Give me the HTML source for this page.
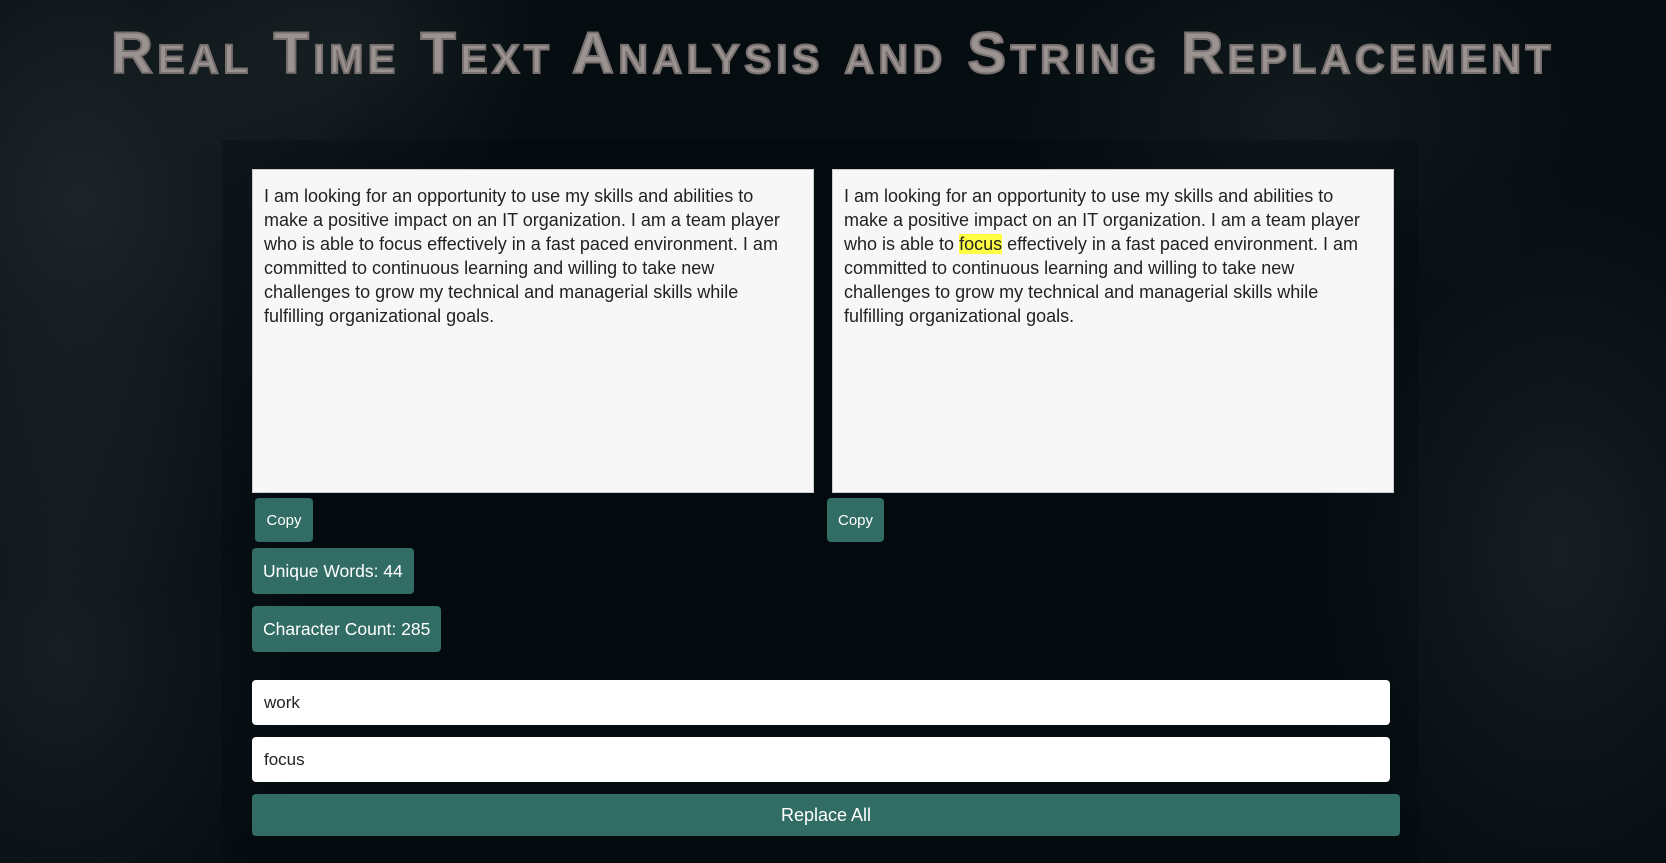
<!DOCTYPE html>
<html><head><meta charset="utf-8">
<style>
*{box-sizing:border-box;margin:0;padding:0}
html,body{width:1666px;height:863px;overflow:hidden}
body{background:#050d11;font-family:"Liberation Sans",sans-serif;position:relative;
background-image:radial-gradient(ellipse 300px 400px at 80px 200px,rgba(70,80,82,.35),transparent),
radial-gradient(ellipse 250px 350px at 60px 650px,rgba(60,70,72,.3),transparent),
radial-gradient(ellipse 260px 380px at 1560px 550px,rgba(60,70,72,.3),transparent),
radial-gradient(ellipse 300px 200px at 1300px 120px,rgba(60,70,72,.25),transparent),
radial-gradient(ellipse 200px 200px at 350px 40px,rgba(60,70,72,.3),transparent);}
h1{position:absolute;left:0;top:24px;width:1666px;text-align:center;font-family:"Liberation Sans",sans-serif;font-weight:bold;font-variant:small-caps;font-size:58px;letter-spacing:4.5px;color:#9b9391;-webkit-text-stroke:2px #77706e;text-shadow:0 0 1px #c8c0be;line-height:60px;white-space:nowrap}
.box{position:absolute;left:222px;top:140px;width:1196px;height:723px;background:rgba(0,8,10,.25)}
.ta{position:absolute;top:169px;width:562px;height:324px;background:#f7f7f7;border:1px solid #ccc;padding:14px 11px;font-family:"Liberation Sans",sans-serif;font-size:18px;line-height:24px;color:#222;white-space:nowrap}
mark{background:#ffff44;color:#222}
.btn{position:absolute;background:#316d64;color:#fff;border-radius:4px;font-size:15px;display:flex;align-items:center;justify-content:center}
.stat{font-size:17.5px;padding:0 11px}
.in{position:absolute;left:252px;width:1138px;height:45px;background:#fff;border-radius:4px;padding:0 12px;font-size:17px;line-height:45px;color:#222}
</style></head><body>
<h1>Real Time Text Analysis and String Replacement</h1>
<div class="box"></div>
<div class="ta" style="left:252px">I am looking for an opportunity to use my skills and abilities to<br>make a positive impact on an IT organization. I am a team player<br>who is able to focus effectively in a fast paced environment. I am<br>committed to continuous learning and willing to take new<br>challenges to grow my technical and managerial skills while<br>fulfilling organizational goals.</div>
<div class="ta" style="left:832px">I am looking for an opportunity to use my skills and abilities to<br>make a positive impact on an IT organization. I am a team player<br>who is able to <mark>focus</mark> effectively in a fast paced environment. I am<br>committed to continuous learning and willing to take new<br>challenges to grow my technical and managerial skills while<br>fulfilling organizational goals.</div>
<div class="btn" style="left:255px;top:498px;width:58px;height:44px">Copy</div>
<div class="btn" style="left:827px;top:498px;width:57px;height:44px">Copy</div>
<div class="btn stat" style="left:252px;top:548px;height:46px">Unique Words: 44</div>
<div class="btn stat" style="left:252px;top:606px;height:46px">Character Count: 285</div>
<div class="in" style="top:680px">work</div>
<div class="in" style="top:737px">focus</div>
<div class="btn" style="left:252px;top:794px;width:1148px;height:42px;font-size:18px">Replace All</div>
</body></html>
